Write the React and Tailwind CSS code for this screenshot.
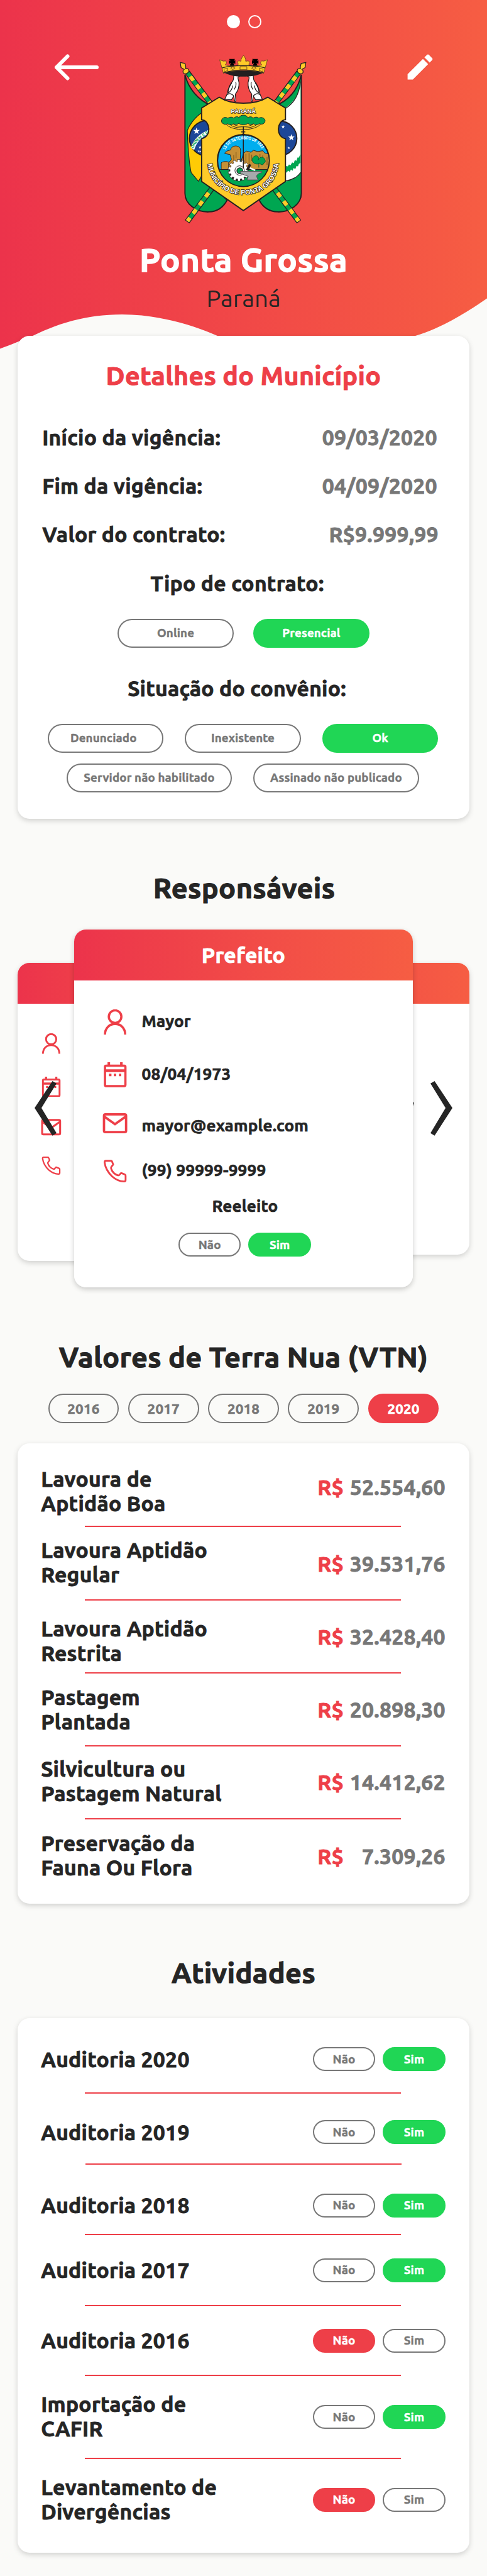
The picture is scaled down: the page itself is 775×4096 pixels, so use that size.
import React from "react";
import { MdEdit } from "react-icons/md";

const cx = (...parts) => parts.filter(Boolean).join(" ");

const heavy = "font-bold tracking-[0.008em] [-webkit-text-stroke-width:0.025em]";

/* ---------- drawings ---------- */

function Star({ x, y, r }) {
  const pts = Array.from({ length: 10 }, (_, i) => {
    const a = (Math.PI / 5) * i - Math.PI / 2;
    const d = i % 2 ? r * 0.4 : r;
    return `${(x + d * Math.cos(a)).toFixed(1)},${(y + d * Math.sin(a)).toFixed(1)}`;
  }).join(" ");
  return <polygon points={pts} fill="#fff" />;
}

function Pole() {
  return (
    <g>
      <path d="M115 128L685 890" stroke="#231f20" strokeWidth="28" />
      <path d="M116 130L683 887" stroke="#00a651" strokeWidth="20" />
      <path d="M116 130L683 887" stroke="#ffcb29" strokeWidth="20" strokeDasharray="26 27" strokeDashoffset="-24" />
      <path
        d="M79 78L103 83L107 99L107 110C122 106 126 118 121 127C112 139 99 138 94 130C91 120 96 115 99 113L83 104Z"
        fill="#ffcb29" stroke="#231f20" strokeWidth="4"
      />
    </g>
  );
}

function Bird() {
  return (
    <g>
      <path
        d="M382 147C374 134 358 132 352 146C352 158 352 166 346 174C328 192 322 220 318 240L306 266L340 268L352 250L357 276L363 276L360 240C374 222 380 202 379 182C376 166 372 158 374 153Z"
        fill="#fff" stroke="#231f20" strokeWidth="4"
      />
      <path d="M342 182C328 200 322 222 324 234C340 222 346 206 346 196M362 178C368 194 360 206 354 216M320 242C332 232 340 238 352 248" fill="none" stroke="#231f20" strokeWidth="4" />
    </g>
  );
}

function Gear() {
  const teeth = Array.from({ length: 14 }, (_, i) => i * (360 / 14));
  return (
    <g>
      {teeth.map((a) => (
        <rect key={`s${a}`} x="370" y="580" width="14" height="16" fill="#231f20" transform={`rotate(${a} 377 632) translate(0 4)`} />
      ))}
      <circle cx="375" cy="636" r="47" fill="#231f20" />
      {teeth.map((a) => (
        <rect key={a} x="371" y="573" width="13" height="18" fill="#fff" stroke="#231f20" strokeWidth="2" transform={`rotate(${a} 378 628)`} />
      ))}
      <circle cx="378" cy="628" r="44" fill="#fff" />
      <circle cx="382" cy="629" r="24" fill="#fff" stroke="#231f20" strokeWidth="3" />
      <circle cx="383" cy="630" r="15" fill="#00a651" stroke="#231f20" strokeWidth="4" />
    </g>
  );
}

function Crest() {
  return (
    <svg viewBox="0 0 810 930" className="h-[290px] w-[253px]" fill="none">
      <defs>
        <path id="arc-town" d="M219 596C238 800 560 810 581 594" />
        <path id="arc-date" d="M311 524C330 456 470 448 496 524" />
        <path id="arc-band" d="M146 517C160 482 184 460 222 440" />
        <clipPath id="medal"><circle cx="401" cy="578" r="130" /></clipPath>
      </defs>

      <path d="M103 140V745C103 800 160 842 225 840C270 838 300 815 318 780L240 700V300C170 270 120 210 103 140Z" fill="#00a651" stroke="#231f20" strokeWidth="6" />
      <path d="M188 335C150 360 125 400 115 425C118 500 122 590 135 640L172 684L195 645V335Z" fill="#ffcb05" stroke="#231f20" strokeWidth="4" />
      <path d="M697 140V745C697 800 640 842 577 840C530 838 500 815 482 780L560 700V300C640 270 680 210 697 140Z" fill="#00a651" stroke="#231f20" strokeWidth="6" />
      <path d="M693 175C686 240 660 285 600 320V688C650 680 680 660 693 638Z" fill="#fff" />
      <path d="M693 175C686 240 660 285 617 312M617 682C650 678 680 660 693 638" stroke="#231f20" strokeWidth="4" />
      <path d="M617 606L628 608L634 598L642 602L650 588L658 592L664 576L672 580L678 562L684 564L692 546V590L684 596L680 608L672 606L666 622L658 616L652 630L644 624L638 636L630 630L617 642Z" fill="#00a651" />

      <circle cx="216" cy="465" r="90" fill="#1c4798" stroke="#231f20" strokeWidth="6" />
      <path d="M133 512C150 465 180 440 228 420L226 440C184 462 165 480 150 524Z" fill="#fff" />
      <text fontSize="20" fontWeight="700" fill="#00a651" className="font-['Liberation_Sans']">
        <textPath href="#arc-band">ORDEM E P</textPath>
      </text>
      <Star x={162} y={428} r={18} /><Star x={180} y={511} r={8} /><Star x={173} y={530} r={6} /><Star x={181} y={532} r={6} />
      <circle cx="586" cy="465" r="88" fill="#1c4798" stroke="#231f20" strokeWidth="6" />
      <Star x={604} y={406} r={10} /><Star x={646} y={461} r={18} /><Star x={633} y={514} r={7} />

      <Pole />
      <g transform="translate(799 0) scale(-1 1)"><Pole /></g>

      <Bird />
      <g transform="translate(804 0) scale(-1 1)"><Bird /></g>

      <path d="M303 130C340 150 380 150 401 150C430 150 470 148 502 130L505 120H300Z" fill="#231f20" />
      <path d="M328 60H358L352 72L360 66V86L350 80L356 96H331L337 80L327 86V66L336 72Z" fill="#000" />
      <path d="M446 60H476L470 72L478 66V86L468 80L474 96H449L455 80L445 86V66L454 72Z" fill="#000" />
      <path
        d="M280 64L298 71L311 70C318 78 314 86 308 90C330 98 350 97 374 92V82C366 74 374 66 389 72C388 58 396 50 402 42C408 50 414 58 413 72C430 66 438 76 430 84V92C452 97 474 98 496 90C488 86 486 78 494 70L506 71L524 64L505 132C450 114 354 114 299 132Z"
        fill="#ffcb29" stroke="#6b4a1c" strokeWidth="3"
      />
      <path d="M292 106C340 90 464 90 512 106M299 132C354 112 450 112 505 132" stroke="#231f20" strokeWidth="4" />
      <path d="M384 99H419V115H384ZM336 107L347 100L359 107L347 114ZM443 107L455 100L467 107L455 114ZM302 112L320 107L323 119L304 125ZM502 112L484 107L481 119L500 125Z" stroke="#6b4a1c" strokeWidth="3" />

      <path
        d="M278 255C340 296 462 296 526 255L616 310V370C574 372 562 456 616 467V685L401 833L188 685V467C242 456 232 372 188 370V310Z"
        fill="#ffcb29" stroke="#231f20" strokeWidth="6"
      />

      <text x="401" y="338" textAnchor="middle" fontSize="31" fontWeight="700" textLength="126" lengthAdjust="spacingAndGlyphs" fill="#fff" stroke="#3a3020" strokeWidth="5" paintOrder="stroke" className="font-['Liberation_Sans']">PARANÁ</text>

      <path d="M313 392C330 414 370 420 401 420S470 414 490 392M330 392C345 408 375 412 401 412S458 408 472 392M350 392C365 403 385 405 401 405S436 403 452 392" stroke="#231f20" strokeWidth="3" />
      <path
        d="M300 391C286 388 286 366 300 360C312 354 320 362 322 362C334 354 348 356 352 362C362 352 374 352 378 360C386 342 416 342 424 360C434 352 446 354 450 362C462 354 476 356 480 362C490 354 510 360 512 374C512 392 494 396 482 390C474 398 458 396 452 390C444 396 430 396 424 388C416 398 386 398 378 388C370 396 358 396 352 390C344 398 326 396 320 390C314 396 304 394 300 391Z"
        fill="#00a651" stroke="#231f20" strokeWidth="3"
      />

      <circle cx="401" cy="578" r="132" fill="#00aeef" stroke="#231f20" strokeWidth="7" />
      <g clipPath="url(#medal)">
        <rect x="260" y="624" width="290" height="100" fill="#00a651" />
        <path d="M288 624V590C296 582 318 580 328 588V624Z" fill="#c69035" stroke="#231f20" strokeWidth="3" />
        <path d="M326 624V590L340 572L334 548L306 542C310 528 326 528 336 524C338 504 366 498 380 510C392 520 384 536 386 552L384 600L402 540L418 530L440 536L452 526L474 532L500 528L510 540L536 546V624Z" fill="#c69035" stroke="#231f20" strokeWidth="3" />
        <path d="M352 550V575M364 535V566M414 545V590M430 540V600M444 548V580M486 545V560M500 552V575M522 560V600" stroke="#6d4a16" strokeWidth="3" />
        <path d="M270 624H536" stroke="#231f20" strokeWidth="3" />
        <path d="M446 578C444 562 462 548 474 556C480 562 480 570 476 576C486 556 506 556 512 576C516 588 508 590 504 592C506 602 490 602 484 592C476 600 450 596 446 578Z" fill="#00a651" stroke="#085c30" strokeWidth="3" />
        <path d="M480 590V614" stroke="#085c30" strokeWidth="3" />
      </g>
      <Gear />
      <path d="M430 596L441 600L428 628L414 626Z" fill="#231f20" />
      <path d="M434 616L462 628" stroke="#fff" strokeWidth="8" />
      <path d="M382 633H495V640C480 642 472 648 468 658L476 677H420L426 658C410 654 396 650 382 633Z" fill="#a7a9ac" stroke="#4d4d4f" strokeWidth="3" />
      <path d="M401 404V618M390 432H411M394 444H409" stroke="#231f20" strokeWidth="5" />
      <text fontSize="23" fontWeight="700" fill="#fff" className="font-['Liberation_Sans']">
        <textPath href="#arc-date" textLength="222" lengthAdjust="spacingAndGlyphs">15 DE SETEMBRO DE 1823</textPath>
      </text>
      <text fontSize="35" fontWeight="700" fill="#fff" stroke="#3a3020" strokeWidth="6" paintOrder="stroke" className="font-['Liberation_Sans']">
        <textPath href="#arc-town" textLength="530" lengthAdjust="spacingAndGlyphs">MUNICÍPIO DE PONTA GROSSA</textPath>
      </text>
    </svg>
  );
}

function UserIcon({ className }) {
  return (
    <svg viewBox="42 72 128 128" className={className} fill="none" stroke="currentColor" strokeWidth="11.5">
      <circle cx="106.500" cy="109" r="32" />
      <path d="M55 200C55 167 78 146 106.500 146S158 167 158 200" />
    </svg>
  );
}

function CalendarIcon({ className }) {
  return (
    <svg viewBox="42 340 128 128" className={className} fill="currentColor">
      <rect x="55" y="357.500" width="104" height="104" rx="6" fill="none" stroke="currentColor" strokeWidth="11.5" />
      <path d="M55 376H159V390H55ZM68 340H81V356H68ZM132 340H145V356H132ZM75 398H88V411H75ZM100 398H112V411H100ZM126 398H138V411H126Z" />
    </svg>
  );
}

function MailIcon({ className }) {
  return (
    <svg viewBox="41 77 128 128" className={className} fill="none" stroke="currentColor" strokeWidth="12">
      <rect x="49" y="96" width="112.500" height="90" rx="7" />
      <path d="M50 107L105 146L160 107" />
    </svg>
  );
}

function PhoneIcon({ className }) {
  return (
    <svg viewBox="42 320 128 128" className={className} fill="none" stroke="currentColor" strokeWidth="9" strokeLinejoin="round">
      <path d="M59 332H86Q90 332 91 336L97 351L88 362Q84 367 86 371Q95 398 121 406L126 406L137 394L155 401Q160 403 160 408V430Q160 437 152 437Q120 437 92 412Q58 380 53 340Q53 332 59 332Z" />
    </svg>
  );
}

function Chevron({ className }) {
  return (
    <svg viewBox="25 287 112 278" className={className} fill="#252525">
      <path d="M25 424L116 287L137 299L60 424L137 552L116 565Z" />
    </svg>
  );
}

/* ---------- building blocks ---------- */

function Pill({ tone, className, children }) {
  return (
    <span
      className={cx(
        "flex items-center justify-center rounded-full border-2",
        heavy,
        tone === "green" && "border-[#20d655] bg-[#20d655] text-white",
        tone === "red" && "border-[#ee3f48] bg-[#ee3f48] text-white",
        !tone && "border-[#777] text-[#777]",
        className
      )}
    >
      {children}
    </span>
  );
}

function YesNo({ yes, className }) {
  return (
    <div className={cx("flex gap-[12px]", className)}>
      <Pill tone={!yes && "red"} className="h-[38px] w-[99.500px] text-[18.800px]">Não</Pill>
      <Pill tone={yes && "green"} className="h-[38px] w-[99.500px] text-[18.800px]">Sim</Pill>
    </div>
  );
}

function Card({ className, children }) {
  return (
    <section className={cx("mx-[28.200px] rounded-[19px] bg-white shadow-[0_3px_8px_rgba(0,0,0,0.17)]", className)}>
      {children}
    </section>
  );
}

function SectionTitle({ className, children }) {
  return <h2 className={cx("text-center text-[45.100px] leading-[56px]", heavy, className)}>{children}</h2>;
}

function Divider({ className }) {
  return <div className={cx("h-[2px] w-[502.700px] bg-[#ee3f48]", className)} />;
}

const details = [
  ["Início da vigência:", "09/03/2020", "mt-[53.700px]", "pr-[51px]"],
  ["Fim da vigência:", "04/09/2020", "mt-[37.400px]", "pr-[51px]"],
  ["Valor do contrato:", "R$9.999,99", "mt-[37.400px]", "pr-[49px]"],
];

const contacts = [
  [UserIcon, "Mayor", "mt-[46.700px]", "pb-[2px]"],
  [CalendarIcon, "08/04/1973", "mt-[43.400px]", "pb-[1px]"],
  [MailIcon, "mayor@example.com", "mt-[37.600px]", "pt-[8px]"],
  [PhoneIcon, "(99) 99999-9999", "mt-[35.700px]", "pb-[1px]"],
];

const landValues = [
  [["Lavoura de", "Aptidão Boa"], "52.554,60", "h-[131.500px] pt-[37px]", "pt-[13.300px]"],
  [["Lavoura Aptidão", "Regular"], "39.531,76", "h-[114.600px] pt-[16.500px]", "pt-[22.200px]"],
  [["Lavoura Aptidão", "Restrita"], "32.428,40", "h-[114px] pt-[25.300px]", "pt-[12.900px]"],
  [["Pastagem", "Plantada"], "20.898,30", "h-[114.100px] pt-[18.100px]", "pt-[20.300px]"],
  [["Silvicultura ou", "Pastagem Natural"], "14.412,62", "h-[114.400px] pt-[16.200px]", "pt-[20.700px]"],
  [["Preservação da", "Fauna Ou Flora"], "7.309,26", "h-[134.400px] pt-[17.700px]", "pt-[21px]"],
];

const activities = [
  [["Auditoria 2020"], true, "h-[118.500px] pt-[46.100px]"],
  [["Auditoria 2019"], true, "h-[110.300px] pt-[41.700px]"],
  [["Auditoria 2018"], true, "h-[110.200px] pt-[45.800px]"],
  [["Auditoria 2017"], true, "h-[110.800px] pt-[36.500px]"],
  [["Auditoria 2016"], false, "h-[109.700px] pt-[35.900px]"],
  [["Importação de", "CAFIR"], true, "h-[129.500px] pt-[24.800px]"],
  [["Levantamento de", "Divergências"], false, "h-[149px] pt-[24.800px]"],
];

const brand = "bg-linear-to-r from-[#ec334b] to-[#f65d43]";

export default function App() {
  return (
    <main className="h-[4096px] w-[775px] overflow-hidden bg-[#fafaf8] font-[Ubuntu,'Noto_Sans',sans-serif] text-[#252525]">
      <header className="relative flex h-[534px] flex-col items-center">
        <svg viewBox="0 0 775 555" className="absolute top-0 left-0 h-[555px] w-[775px]">
          <defs>
            <linearGradient id="hero" x1="0" x2="1" y1="0" y2="0">
              <stop offset="0" stopColor="#ec334b" />
              <stop offset="1" stopColor="#f65d43" />
            </linearGradient>
          </defs>
          <path d="M0 0H775V474.600C745 495 705 521 661 534C560 590 460 590 346 534C305 516 250 500 194.200 500C140 500 95 513 52 534C35 541 15 549 0 554.500Z" fill="url(#hero)" />
        </svg>
        <div className="relative flex w-full justify-center gap-[13px] pt-[24px] pl-[2px]">
          <span className="size-[21px] rounded-full bg-white" />
          <span className="size-[21px] rounded-full border-2 border-white" />
        </div>
        <div className="relative mt-[30px] flex h-[290px] w-full items-start pl-[86px]">
          <svg viewBox="0 0 71 42" className="mt-[10.500px] h-[42px] w-[71px]" fill="none" stroke="#fff" strokeWidth="6" strokeLinecap="round" strokeLinejoin="round">
            <path d="M68 21H4M21.500 3.500L4 21L21.500 38.500" />
          </svg>
          <div className="ml-[105px]"><Crest /></div>
          <MdEdit className="mt-[4.500px] ml-[127px] size-[53px] text-white" />
        </div>
        <h1 className={cx("relative mt-[16px] text-[52.700px] leading-[64px] text-white", heavy)}>Ponta Grossa</h1>
        <p className="relative mt-[5px] text-[38.400px] leading-[48px]">Paraná</p>
      </header>

      <Card className="relative h-[768px] pt-[38px]">
        <h2 className={cx("text-center text-[41.200px] leading-[50px] text-[#ee3f48]", heavy)}>Detalhes do Município</h2>
        {details.map(([label, value, gap, right]) => (
          <div key={label} className={cx("flex justify-between pl-[39px] text-[33.700px] leading-[40px]", heavy, gap, right)}>
            <span>{label}</span>
            <span className="text-[#777]">{value}</span>
          </div>
        ))}
        <h3 className={cx("mt-[37.300px] pr-[20px] text-center text-[33.700px] leading-[40px]", heavy)}>Tipo de contrato:</h3>
        <div className="mt-[36.500px] flex justify-center gap-[31.600px] text-[18.700px]">
          <Pill className="h-[45.500px] w-[184.400px]">Online</Pill>
          <Pill tone="green" className="h-[45.500px] w-[184.400px]">Presencial</Pill>
        </div>
        <h3 className={cx("mt-[44.800px] pr-[21px] text-center text-[33.700px] leading-[40px]", heavy)}>Situação do convênio:</h3>
        <div className="mt-[36.500px] flex justify-between pr-[49.400px] pl-[47.400px] text-[18.700px]">
          <Pill className="h-[45.500px] w-[184.400px] pr-[6px]">Denunciado</Pill>
          <Pill className="h-[45.500px] w-[184.400px]">Inexistente</Pill>
          <Pill tone="green" className="h-[45.500px] w-[184.400px]">Ok</Pill>
        </div>
        <div className="mt-[17.700px] flex gap-[34.100px] pl-[77.600px] text-[18.700px]">
          <Pill className="h-[45.700px] w-[263.400px]">Servidor não habilitado</Pill>
          <Pill className="h-[45.700px] w-[263.400px]">Assinado não publicado</Pill>
        </div>
      </Card>

      <SectionTitle className="mt-[82.300px] pl-[2px]">Responsáveis</SectionTitle>

      <div className="relative mt-[37.900px] h-[569px]">
        <div className="absolute top-[52.400px] left-[28.200px] h-[474.400px] w-[441px] overflow-hidden rounded-[19px] bg-white shadow-[0_3px_8px_rgba(0,0,0,0.17)]">
          <div className={cx("h-[65.400px]", brand)} />
          <div className="flex flex-col pl-[37.300px] text-[#ee3f48]">
            <UserIcon className="mt-[47.500px] size-[32.600px]" />
            <CalendarIcon className="mt-[35.700px] size-[32.600px]" />
            <MailIcon className="mt-[31.400px] size-[32.600px]" />
            <PhoneIcon className="mt-[28.700px] size-[32.600px]" />
          </div>
        </div>
        <div className="absolute top-[52.400px] left-[305.800px] h-[464.100px] w-[441px] overflow-hidden rounded-[19px] bg-white shadow-[0_3px_8px_rgba(0,0,0,0.17)]">
          <div className={cx("h-[65.400px]", brand)} />
          <svg viewBox="0 0 5 8" className="mt-[157px] ml-[348.500px] h-[8px] w-[5px]" fill="#252525">
            <path d="M2.500 0H4.800L2.500 7.500H0Z" />
          </svg>
        </div>

        <div className="absolute top-0 left-[118.100px] h-[569px] w-[538.700px] rounded-[19px] shadow-[0_3px_8px_rgba(0,0,0,0.2)]">
          <article className="h-full overflow-hidden rounded-[19px] bg-white">
            <h3 className={cx("flex h-[80.400px] items-center justify-center pt-[2px] text-[33.700px] text-white", heavy, brand)}>Prefeito</h3>
            {contacts.map(([Icon, text, gap, nudge]) => (
              <div key={text} className={cx("flex h-[40px] items-center gap-[22.500px] pl-[45px]", gap)}>
                <Icon className="size-[40px] text-[#ee3f48]" />
                <span className={cx("text-[26.100px] leading-[32px]", heavy, nudge)}>{text}</span>
              </div>
            ))}
            <p className={cx("mt-[20.100px] pl-[5px] text-center text-[26.100px] leading-[32px]", heavy)}>Reeleito</p>
            <YesNo yes className="mt-[25.700px] justify-center pl-[4px]" />
          </article>
        </div>

        <Chevron className="absolute top-[241.100px] left-[54.600px] h-[86.700px] w-[35px]" />
        <Chevron className="absolute top-[241.100px] left-[685.200px] h-[86.700px] w-[35px] -scale-x-100" />
      </div>

      <SectionTitle className="mt-[82.600px]">Valores de Terra Nua (VTN)</SectionTitle>
      <div className="mt-[30.300px] flex justify-center gap-[14.600px] text-[22.400px]">
        {["2016", "2017", "2018", "2019", "2020"].map((year) => (
          <Pill key={year} tone={year === "2020" && "red"} className="h-[46.900px] w-[112.700px]">{year}</Pill>
        ))}
      </div>

      <Card className="mt-[31.600px] h-[732.700px]">
        {landValues.map(([label, value, box, drop], i) => (
          <React.Fragment key={value}>
            {i > 0 && <Divider className="ml-[106.700px]" />}
            <div className={cx("flex items-start justify-between pr-[38px] pl-[37px] text-[33.700px] leading-[39.200px]", heavy, box)}>
              <div>{label.map((line) => <div key={line}>{line}</div>)}</div>
              <div className={cx("flex w-[203.500px] justify-between", drop)}>
                <span className="text-[#ee3f48]">R$</span>
                <span className="text-[#777]">{value}</span>
              </div>
            </div>
          </React.Fragment>
        ))}
      </Card>

      <SectionTitle className="mt-[82px]">Atividades</SectionTitle>

      <Card className="mt-[43.500px] h-[850.100px]">
        {activities.map(([label, yes, box], i) => (
          <React.Fragment key={label[0]}>
            {i > 0 && <Divider className={i === 2 ? "ml-[108.200px]" : "ml-[106.700px]"} />}
            <div className={cx("flex items-start justify-between pr-[38px] pl-[37px] text-[33.700px] leading-[39.200px]", heavy, box)}>
              <div>{label.map((line) => <div key={line}>{line}</div>)}</div>
              <YesNo yes={yes} className={label.length > 1 ? "pt-[21.200px]" : "pt-[0.300px]"} />
            </div>
          </React.Fragment>
        ))}
      </Card>
    </main>
  );
}
